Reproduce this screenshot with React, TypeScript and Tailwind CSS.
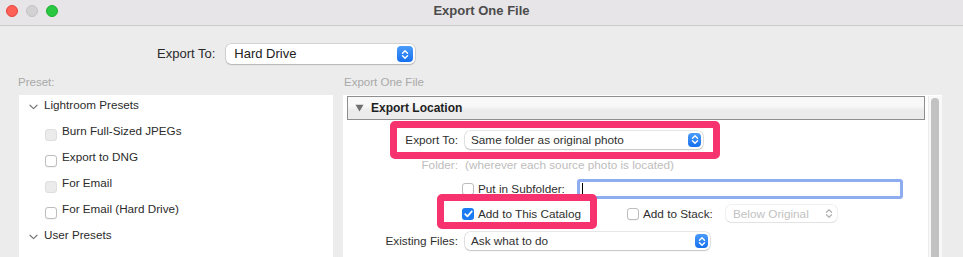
import React from "react";

function Stepper({ big = false, disabled = false }: { big?: boolean; disabled?: boolean }) {
  const size = big ? "h-[16px] w-[16px]" : "h-[14px] w-[13px]";
  if (disabled) {
    return (
      <span className={`flex items-center justify-center ${size}`}>
        <svg width="8" height="11" viewBox="0 0 8 11">
          <path d="M1.5 4.2 L4 1.7 L6.5 4.2 M1.5 6.8 L4 9.3 L6.5 6.8" stroke="#b4b4b4" strokeWidth="1.3" fill="none" strokeLinecap="round" strokeLinejoin="round" />
        </svg>
      </span>
    );
  }
  return (
    <span className={`flex items-center justify-center rounded-[4px] bg-linear-to-b from-[#4a9bfb] to-[#1570ee] ${size}`}>
      <svg width="8" height="11" viewBox="0 0 8 11">
        <path d="M1.5 4.2 L4 1.7 L6.5 4.2 M1.5 6.8 L4 9.3 L6.5 6.8" stroke="white" strokeWidth="1.4" fill="none" strokeLinecap="round" strokeLinejoin="round" />
      </svg>
    </span>
  );
}

function Checkbox({ checked = false, dim = false, className = "" }: { checked?: boolean; dim?: boolean; className?: string }) {
  if (checked) {
    return (
      <span className={`flex h-[12px] w-[12px] shrink-0 items-center justify-center rounded-[3px] bg-[#1b7bf3] ${className}`}>
        <svg width="9" height="8" viewBox="0 0 9 8">
          <path d="M1.2 4.2 L3.4 6.4 L7.8 1.4" stroke="white" strokeWidth="1.7" fill="none" strokeLinecap="round" strokeLinejoin="round" />
        </svg>
      </span>
    );
  }
  return (
    <span
      className={`block h-[12px] w-[12px] shrink-0 rounded-[3px] border ${
        dim ? "border-[#dedede] bg-[#ebebeb]" : "border-[#bdbdbd] bg-white shadow-[0_0.5px_0.5px_rgba(0,0,0,0.08)]"
      } ${className}`}
    />
  );
}

function Chevron() {
  return (
    <svg width="9" height="6" viewBox="0 0 9 6" className="mt-[4px] shrink-0">
      <path d="M1 1.2 L4.5 4.6 L8 1.2" stroke="#7a7a7a" strokeWidth="1.2" fill="none" strokeLinecap="round" strokeLinejoin="round" />
    </svg>
  );
}

export default function App() {
  return (
    <div className="h-[257px] w-[963px] overflow-hidden bg-[#ececec] font-['Liberation_Sans',Arial,sans-serif] text-[#262626]">
      {/* Title bar */}
      <div className="grid h-[26px] grid-cols-[1fr_auto_1fr] items-center border-b border-[#cbcbcb] bg-[#e7e5e7] pb-[3px]">
        <div className="flex gap-[8px] pl-[6px]">
          <span className="block h-[12px] w-[12px] rounded-full border border-[#e2463f] bg-[#fe5f57]" />
          <span className="block h-[12px] w-[12px] rounded-full border border-[#c4c3c4] bg-[#d3d2d3]" />
          <span className="block h-[12px] w-[12px] rounded-full border border-[#1fae34] bg-[#2ac840]" />
        </div>
        <div className="text-[13px] font-bold text-[#4b4b4b]">Export One File</div>
        <div />
      </div>

      {/* Export To row */}
      <div className="flex items-center pl-[157px] pt-[18px]">
        <span className="text-[13px] leading-[20px] text-[#2a2a2a]">Export To:</span>
        <div className="ml-[11px] flex h-[20px] w-[189px] items-center justify-between rounded-[5px] bg-white pl-[8px] pr-[2px] shadow-[0_0_0_0.5px_rgba(0,0,0,0.2),0_1px_1.5px_rgba(0,0,0,0.15)]">
          <span className="text-[13px] text-[#222]">Hard Drive</span>
          <Stepper big />
        </div>
      </div>

      {/* Columns */}
      <div className="flex pt-[11px]">
        {/* Left column */}
        <div className="ml-[18px] w-[315px]">
          <div className="mb-[6px] h-[14px] text-[11.5px] leading-[14px] text-[#a9a9a9]">Preset:</div>
          <div className="ml-[1px] h-[170px] w-[314px] overflow-hidden bg-white">
            <div className="-mt-[3px] text-[11.7px] text-[#2b2b2b]">
              <div className="flex h-[26px] items-center gap-[6px] pl-[10px]">
                <Chevron />
                <span>Lightroom Presets</span>
              </div>
              {[
                { t: "Burn Full-Sized JPEGs", dim: true },
                { t: "Export to DNG", dim: false },
                { t: "For Email", dim: true },
                { t: "For Email (Hard Drive)", dim: false },
              ].map((r) => (
                <div key={r.t} className="flex h-[26px] items-center gap-[5px] pl-[26px]">
                  <Checkbox dim={r.dim} className="mt-[7px]" />
                  <span>{r.t}</span>
                </div>
              ))}
              <div className="flex h-[26px] items-center gap-[6px] pl-[10px]">
                <Chevron />
                <span>User Presets</span>
              </div>
              <div className="flex h-[26px] items-center gap-[5px] pl-[26px] pt-[4px]">
                <Checkbox dim className="mt-[7px]" />
                <span className="text-[#b0b0b0]">Untitled Preset</span>
              </div>
            </div>
          </div>
        </div>

        {/* Right column */}
        <div className="ml-[10px] w-[599px]">
          <div className="mb-[6px] h-[14px] pl-[1px] text-[11.5px] leading-[14px] text-[#a9a9a9]">Export One File</div>
          <div className="flex h-[170px] bg-white pl-[4px] pt-[1px]">
            <div className="relative w-[578px]">
              {/* Section header */}
              <div className="flex h-[24px] items-center gap-[7px] border border-[#8e8e8e] bg-linear-to-b from-[#f8f8f8] from-40% to-[#ebebeb] to-60% pl-[7px]">
                <svg width="9" height="8" viewBox="0 0 9 8">
                  <path d="M0.5 0.8 L8.5 0.8 L4.5 7.5 Z" fill="#6f6f6f" />
                </svg>
                <span className="text-[12px] font-bold text-[#1f1f1f]">Export Location</span>
              </div>

              <div className="text-[11.75px] text-[#2f2f2f]">
                {/* Export To */}
                <div className="flex h-[39px] items-center">
                  <span className="w-[111px] text-right">Export To:</span>
                  <div className="ml-[7px] flex h-[18px] w-[238px] items-center justify-between rounded-[5px] bg-white pl-[6px] pr-[2px] shadow-[0_0_0_0.5px_rgba(0,0,0,0.2),0_1px_1.5px_rgba(0,0,0,0.14)]">
                    <span>Same folder as original photo</span>
                    <Stepper />
                  </div>
                </div>
                {/* Folder */}
                <div className="flex h-[12px] items-center text-[#bdbdbd]">
                  <span className="w-[111px] text-right">Folder:</span>
                  <span className="ml-[7px]">(wherever each source photo is located)</span>
                </div>
                {/* Subfolder */}
                <div className="mt-[6px] flex h-[24px] items-center">
                  <span className="w-[111px]" />
                  <div className="ml-[4px] flex items-center">
                    <Checkbox />
                    <span className="ml-[4px] w-[99px]">Put in Subfolder:</span>
                    <div className="flex h-[20px] w-[326px] items-center rounded-[3px] border-[3px] border-[#8eadf0] bg-white">
                      <span className="ml-[2px] block h-[13px] w-px bg-black" />
                    </div>
                  </div>
                </div>
                {/* Catalog / Stack */}
                <div className="mt-[1px] flex h-[23px] items-center">
                  <span className="w-[111px]" />
                  <div className="ml-[4px] flex items-center">
                    <Checkbox checked />
                    <span className="ml-[4px] w-[149px]">Add to This Catalog</span>
                    <Checkbox />
                    <span className="ml-[4px] w-[83px]">Add to Stack:</span>
                    <div className="flex h-[17px] w-[111px] items-center justify-between rounded-[5px] bg-white pl-[7px] pr-[2px] shadow-[0_0_0_0.5px_rgba(0,0,0,0.12),0_1px_1px_rgba(0,0,0,0.06)]">
                      <span className="text-[#c2c2c2]">Below Original</span>
                      <Stepper disabled />
                    </div>
                  </div>
                </div>
                {/* Existing Files */}
                <div className="mt-[5px] flex h-[22px] items-center">
                  <span className="w-[111px] text-right">Existing Files:</span>
                  <div className="ml-[7px] flex h-[18px] w-[245px] items-center justify-between rounded-[5px] bg-white pl-[6px] pr-[2px] shadow-[0_0_0_0.5px_rgba(0,0,0,0.2),0_1px_1.5px_rgba(0,0,0,0.14)]">
                    <span>Ask what to do</span>
                    <Stepper />
                  </div>
                </div>
              </div>

              {/* Highlight overlays */}
              <div className="pointer-events-none absolute left-[43px] top-[25px] h-[38px] w-[330px] rounded-[5px] border-[7px] border-[#f6336f]" />
              <div className="pointer-events-none absolute left-[90px] top-[98px] h-[35px] w-[160px] rounded-[5px] border-[7px] border-[#f6336f]" />
            </div>
            {/* Scrollbar */}
            <div className="ml-[3px] w-[14px] border-l border-[#ececec] bg-[#f8f8f8] pl-[2px] pt-[2px]">
              <div className="h-[200px] w-[8px] rounded-full bg-[#c2c2c2]" />
            </div>
          </div>
        </div>
      </div>
    </div>
  );
}
